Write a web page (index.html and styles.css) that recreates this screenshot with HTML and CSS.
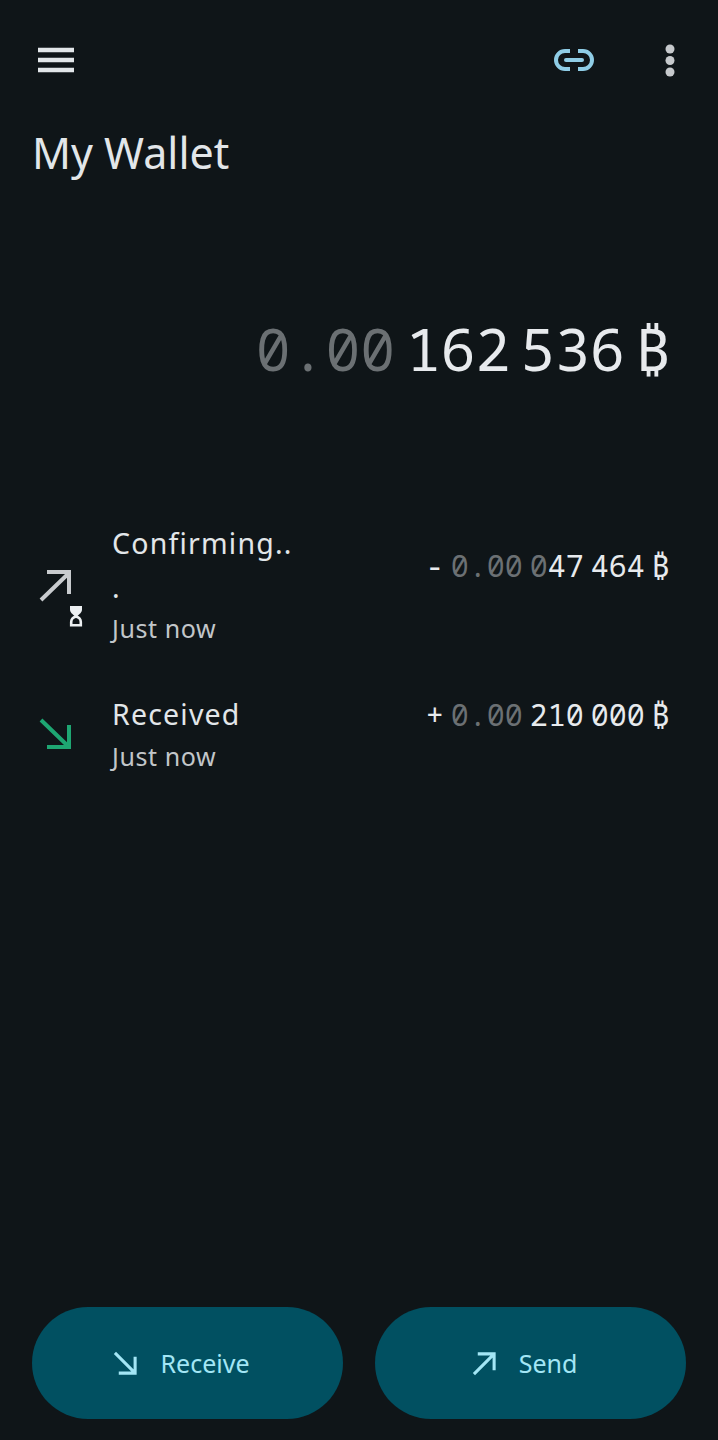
FILE: index.html
```html
<!DOCTYPE html>
<html lang="en">
<head>
<meta charset="utf-8">
<title>My Wallet</title>
<link rel="stylesheet" href="styles.css">
</head>
<body>
<main class="screen">
  <header class="toolbar">
    <svg class="icon-menu" width="36" height="26" viewBox="0 0 36 26"><path d="M0 3h36M0 13h36M0 23h36" stroke="#e2e6e9" stroke-width="4.4"/></svg>
    <div class="toolbar-actions">
      <svg class="icon-link" width="40" height="24" viewBox="0 0 40 24" fill="none" stroke="#8fcde6" stroke-width="4"><path d="M16 3H11a9 9 0 0 0 0 18h5M24 3h5a9 9 0 0 1 0 18h-5"/><path d="M12 12h16" stroke-linecap="round"/></svg>
      <svg class="icon-more" width="10" height="33" viewBox="0 0 10 33" fill="#c6c9cc"><circle cx="5" cy="5" r="4.500"/><circle cx="5" cy="16.500" r="4.500"/><circle cx="5" cy="28" r="4.500"/></svg>
    </div>
  </header>

  <h1 class="title">My Wallet</h1>

  <div class="balance">
    <span class="dim">0.00</span><span class="gap-l">162</span><span class="gap-s">536</span><span class="btc">₿</span>
  </div>

  <section class="activity">
    <article class="tx tx-pending">
      <div class="tx-icon">
        <svg width="34" height="34" viewBox="0 0 34 34" fill="none" stroke="#c8cbce" stroke-width="4"><path d="M2 31 30 4M8 3h22v22"/></svg>
        <svg class="hourglass" width="14" height="22" viewBox="0 0 14 22"><path d="M1 1h12v3.500c0 3-2.500 4.500-4.500 6.500h-3C3.500 9 1 7.500 1 4.500z" fill="#eceff1"/><path d="M7 11.500c-3 .8-4.800 2.600-4.800 5.500v3.300h9.600V17c0-2.900-1.800-4.700-4.800-5.500z" fill="none" stroke="#eceff1" stroke-width="2.600"/></svg>
      </div>
      <div class="tx-text">
        <div class="tx-label">Confirming...</div>
        <div class="tx-time">Just now</div>
      </div>
      <div class="amount"><span class="sign">-</span><span class="dim">0.00</span><span class="gap-xs dim">0</span>47<span class="gap-xs">464</span><span class="btc">₿</span></div>
    </article>

    <article class="tx tx-received">
      <div class="tx-icon">
        <svg width="34" height="34" viewBox="0 0 34 34" fill="none" stroke="#1ea672" stroke-width="4"><path d="M2 3 30 30M8 30h22V8"/></svg>
      </div>
      <div class="tx-text">
        <div class="tx-label">Received</div>
        <div class="tx-time">Just now</div>
      </div>
      <div class="amount"><span class="sign">+</span><span class="dim">0.00</span><span class="gap-xs">210</span><span class="gap-xs">000</span><span class="btc">₿</span></div>
    </article>
  </section>

  <footer class="actions">
    <button class="pill">
      <svg width="25" height="25" viewBox="0 0 26 26" fill="none" stroke="#a3e6f5" stroke-width="3.200"><path d="M2 2 23 23M6 23h17V6"/></svg>
      <span>Receive</span>
    </button>
    <button class="pill">
      <svg width="25" height="25" viewBox="0 0 26 26" fill="none" stroke="#a3e6f5" stroke-width="3.200"><path d="M2 24 23 3M6 3h17v17"/></svg>
      <span>Send</span>
    </button>
  </footer>
</main>
</body>
</html>
```

FILE: styles.css
```css
* { box-sizing: border-box; }

html, body {
  margin: 0;
  background: #0f1518;
}

.screen {
  width: 718px;
  height: 1440px;
  display: flex;
  flex-direction: column;
  font-family: "Noto Sans", "Open Sans", sans-serif;
  color: #e2e6e9;
  overflow: hidden;
}

.toolbar {
  display: flex;
  justify-content: space-between;
  align-items: center;
  padding: 44px 43px 0 38px;
  height: 76px;
}

.toolbar-actions {
  display: flex;
  align-items: center;
  gap: 71px;
}

.title {
  margin: 47px 0 0 32px;
  font-size: 43px;
  line-height: 60px;
  font-weight: 400;
  color: #e2e6e9;
}

.balance {
  margin-top: 128px;
  padding-right: 49px;
  display: flex;
  justify-content: flex-end;
  align-items: baseline;
  font-family: "Noto Sans Mono", "DejaVu Sans Mono", monospace;
  font-size: 58px;
  line-height: 76px;
  color: #e7eaed;
}

.dim { color: #6b7073; }
.gap-l { margin-left: 11px; }
.gap-s { margin-left: 10px; }
.gap-xs { margin-left: 7px; }
.btc { margin-left: 11px; font-family: "Noto Sans", "DejaVu Sans", sans-serif; }

.activity {
  margin-top: 134px;
  display: flex;
  flex-direction: column;
}

.tx {
  display: flex;
  align-items: flex-start;
  padding-left: 39px;
  padding-right: 49px;
}

.tx-pending { height: 171px; }
.tx-received { height: 100px; }

.tx-icon {
  position: relative;
  width: 73px;
  padding-top: 48px;
  flex: none;
}

.tx-received .tx-icon { padding-top: 25px; }

.hourglass {
  position: absolute;
  left: 30px;
  top: 84px;
}

.tx-text { width: 184px; flex: none; }

.tx-label {
  font-size: 28.5px;
  line-height: 44px;
  letter-spacing: 1.2px;
  color: #e2e6e9;
  overflow-wrap: anywhere;
}

.tx-time {
  font-size: 25px;
  line-height: 40px;
  letter-spacing: 0.6px;
  color: #c2c6c9;
}

.tx-pending .tx-time { margin-top: -1px; }

.amount {
  margin-left: auto;
  margin-top: 2px;
  display: flex;
  align-items: baseline;
  font-family: "Noto Sans Mono", "DejaVu Sans Mono", monospace;
  font-size: 30px;
  line-height: 42px;
  color: #e7eaed;
}

.tx-pending .amount { margin-top: 24px; }

.sign { margin-right: 7px; }

.amount .btc { margin-left: 7px; }

.actions {
  margin-top: auto;
  margin-bottom: 21px;
  padding: 0 32px;
  display: flex;
  gap: 32px;
}

.pill {
  flex: 1;
  height: 112px;
  border: none;
  border-radius: 56px;
  padding: 0 12px 0 0;
  background: #015061;
  color: #a3e6f5;
  font: inherit;
  font-size: 25px;
  display: flex;
  align-items: center;
  justify-content: center;
  gap: 22px;
}
```
